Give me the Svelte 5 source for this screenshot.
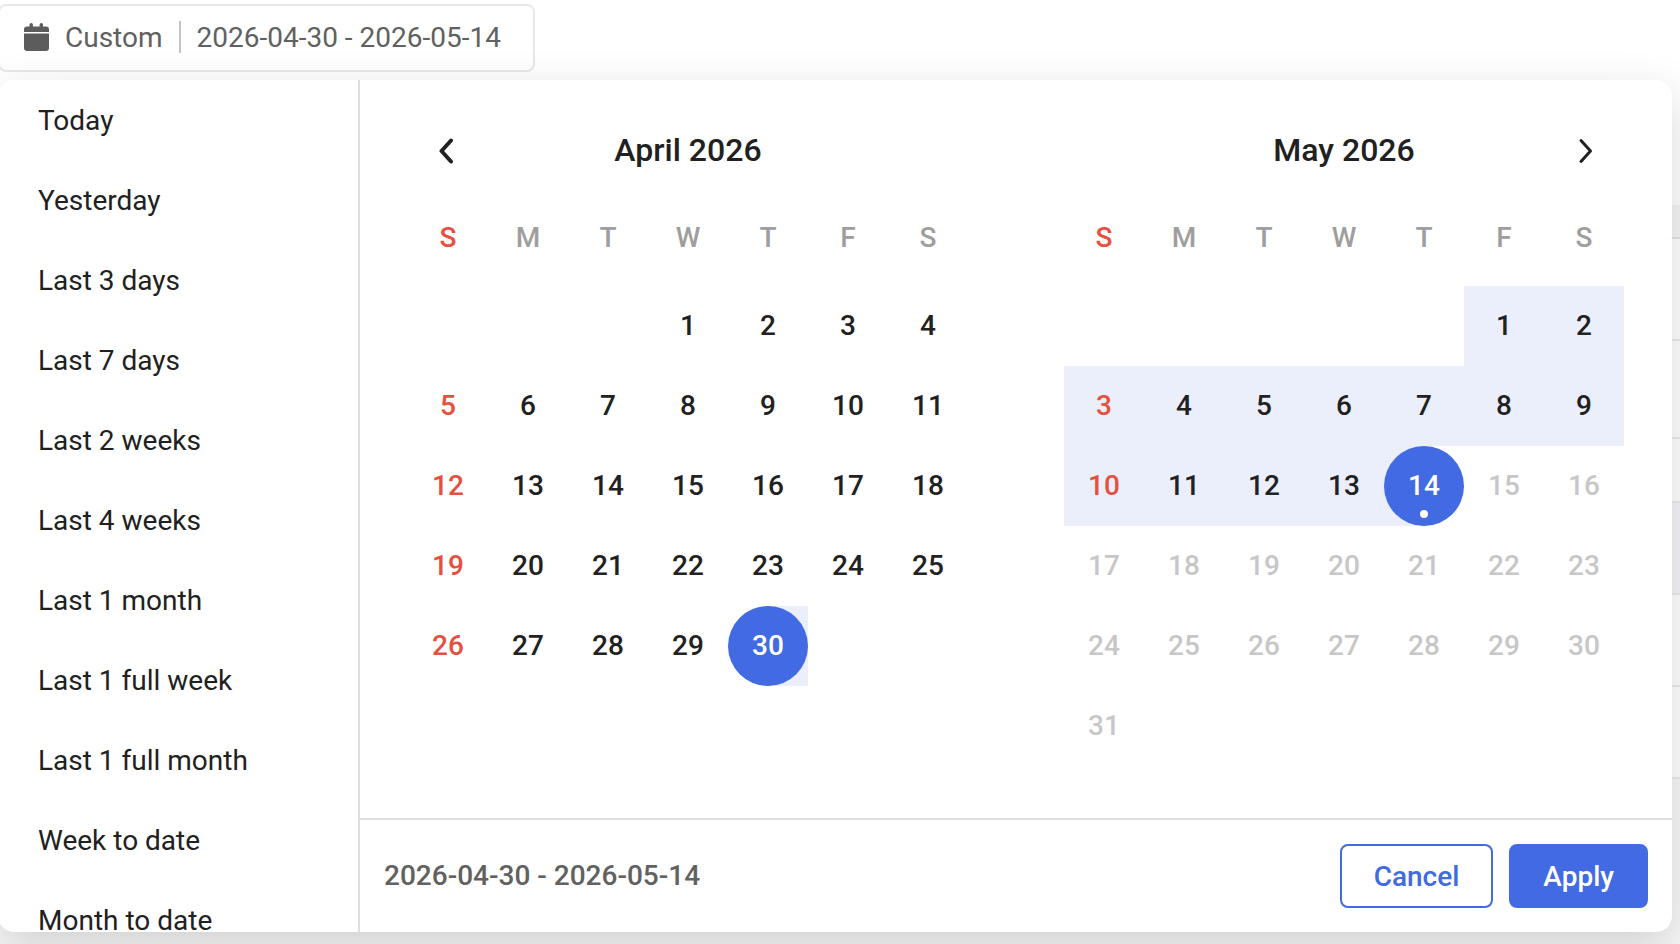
<script>
  let open = $state(true);
  let selected = $state('Custom');

  const range = { start: '2026-04-30', end: '2026-05-14' };
  const today = '2026-05-14';

  const presets = [
    'Today',
    'Yesterday',
    'Last 3 days',
    'Last 7 days',
    'Last 2 weeks',
    'Last 4 weeks',
    'Last 1 month',
    'Last 1 full week',
    'Last 1 full month',
    'Week to date',
    'Month to date'
  ];

  const weekdays = [
    ['S', 'Sunday'],
    ['M', 'Monday'],
    ['T', 'Tuesday'],
    ['W', 'Wednesday'],
    ['T', 'Thursday'],
    ['F', 'Friday'],
    ['S', 'Saturday']
  ];

  const months = [buildMonth('April', 2026, 4), buildMonth('May', 2026, 5)];

  // weeks of a month, padded with null before the 1st and after the last day
  function buildMonth(name, year, month) {
    const first = new Date(year, month - 1, 1).getDay();
    const count = new Date(year, month, 0).getDate();
    const cells = Array(first).fill(null);
    for (let d = 1; d <= count; d++) {
      const iso = `${year}-${String(month).padStart(2, '0')}-${String(d).padStart(2, '0')}`;
      cells.push({ d, iso });
    }
    while (cells.length % 7) cells.push(null);
    const weeks = [];
    for (let i = 0; i < cells.length; i += 7) weeks.push(cells.slice(i, i + 7));
    return { title: `${name} ${year}`, weeks };
  }

  function inRange(iso) {
    return iso > range.start && iso < range.end;
  }
</script>

<div class="page">
  <button class="trigger" onclick={() => (open = !open)}>
    <svg width="25" height="28" viewBox="0 0 25 28" aria-hidden="true">
      <path d="M5.500 4V1.500a1.700 1.500 0 0 1 3.400 0V3.500h6.700v-2a1.700 1.500 0 0 1 3.400 0v2H22a3 3 0 0 1 3 3V9H0V6.500a3 3 0 0 1 3-3h2.500z" />
      <path d="M0 10.500h25V25a3 3 0 0 1-3 3H3a3 3 0 0 1-3-3z" />
    </svg>
    <span>{selected}</span>
    <span class="bar"></span>
    <span>{range.start} - {range.end}</span>
  </button>

  <div class="backdrop" aria-hidden="true">
    <div class="row head"></div>
    <div class="row tall"></div>
    <div class="row"></div>
    <div class="row short"></div>
    <div class="row marked"></div>
    <div class="row"></div>
    <div class="row"></div>
    <div class="rest"></div>
  </div>

  {#if open}
    <div class="popover" role="dialog" aria-label="Date range">
      <ul class="presets">
        {#each presets as preset (preset)}
          <li><button onclick={() => (selected = preset)}>{preset}</button></li>
        {/each}
      </ul>

      <div class="main">
        <div class="months">
          {#each months as month, i (month.title)}
            <section class="month">
              <header>
                {#if i === 0}
                  <button class="nav" aria-label="Previous month">
                    <svg width="20" height="28" viewBox="0 0 20 28"><path d="M13 4.500 3.500 15 13 25.500" stroke-width="4" /></svg>
                  </button>
                {:else}
                  <span></span>
                {/if}
                <h2>{month.title}</h2>
                {#if i === 1}
                  <button class="nav" aria-label="Next month">
                    <svg width="20" height="28" viewBox="0 0 20 28"><path d="M7 4.500 16.500 15 7 25.500" stroke-width="3" /></svg>
                  </button>
                {/if}
              </header>
              <table>
                <thead>
                  <tr>
                    {#each weekdays as [short, full] (full)}
                      <th scope="col" abbr={full}>{short}</th>
                    {/each}
                  </tr>
                </thead>
                <tbody>
                  {#each month.weeks as week}
                    <tr>
                      {#each week as day}
                        {#if day}
                          <td
                            class:in-range={inRange(day.iso)}
                            class:start={day.iso === range.start}
                            class:end={day.iso === range.end}
                            class:today={day.iso === today}
                          >
                            <button disabled={day.iso > today}>{day.d}</button>
                          </td>
                        {:else}
                          <td></td>
                        {/if}
                      {/each}
                    </tr>
                  {/each}
                </tbody>
              </table>
            </section>
          {/each}
        </div>

        <footer>
          <span class="summary">{range.start} - {range.end}</span>
          <button class="btn" onclick={() => (open = false)}>Cancel</button>
          <button class="btn primary" onclick={() => (open = false)}>Apply</button>
        </footer>
      </div>
    </div>
  {/if}
</div>

<style>
  :global(body) {
    background: #fff;
  }
  .page {
    position: relative;
    height: 100vh;
    overflow: hidden;
    padding-top: 4px;
    box-sizing: border-box;
    font-family: Roboto, 'Liberation Sans', sans-serif;
    font-size: 28px;
    color: #212121;
  }
  button {
    font: inherit;
    color: inherit;
    background: none;
    border: 0;
    padding: 0;
    cursor: pointer;
  }
  .trigger {
    display: flex;
    align-items: center;
    gap: 16px;
    height: 68px;
    margin-left: -2px;
    padding: 0 32px 2px 24px;
    border: 2px solid #e8e8e8;
    border-radius: 8px;
    color: #616161;
  }
  .trigger svg {
    fill: #5c5c5c;
  }
  .bar {
    width: 2px;
    height: 32px;
    background: #c4c4c4;
  }

  /* page content that shows past the popover's right edge */
  .backdrop {
    position: absolute;
    inset: 205px 0 0 0;
    display: flex;
    flex-direction: column;
  }
  .row {
    box-sizing: border-box;
    height: 92px;
    flex: none;
    border-bottom: 2px solid #ececec;
  }
  .row:nth-child(3) {
    height: 98px;
  }
  .row.head {
    height: 34px;
    background: #f6f6f6;
    border-color: #e4e4ee;
  }
  .row.tall {
    height: 102px;
  }
  .row.short {
    height: 64px;
  }
  .row.marked {
    background: #f5f5fc;
  }
  .rest {
    flex: 1;
    background: #f8f8f8;
  }

  .popover {
    position: absolute;
    inset: 80px 8px 12px -2px;
    display: flex;
    overflow: hidden;
    background: #fff;
    border-radius: 16px;
    box-shadow: 0 16px 48px rgba(0, 0, 0, 0.16);
  }
  .presets {
    flex: none;
    width: 360px;
    margin: 0;
    padding: 0;
    list-style: none;
    overflow-y: auto;
    scrollbar-width: none;
    border-right: 2px solid #dedede;
  }
  .presets button {
    display: block;
    width: 100%;
    height: 80px;
    padding: 0 40px;
    text-align: left;
  }
  .main {
    flex: 1;
    display: flex;
    flex-direction: column;
  }
  .months {
    flex: 1;
    display: flex;
    justify-content: space-between;
    padding: 30px 48px 0;
  }
  header {
    display: grid;
    grid-template-columns: 80px 1fr 80px;
    align-items: center;
    height: 80px;
  }
  h2 {
    margin: 0;
    font-size: 32px;
    font-weight: 500;
    text-align: center;
  }
  .nav {
    display: grid;
    place-items: center;
    height: 80px;
  }
  .nav path {
    fill: none;
    stroke: #212121;
    stroke-linecap: round;
    stroke-linejoin: round;
  }
  table {
    border-collapse: collapse;
    table-layout: fixed;
    width: 560px;
  }
  th,
  td {
    box-sizing: border-box;
    width: 80px;
    padding: 0;
    text-align: center;
    font-weight: 500;
  }
  th {
    height: 96px;
    padding-bottom: 2px;
    color: #9e9e9e;
  }
  td {
    height: 80px;
  }
  td button {
    position: relative;
    display: block;
    width: 80px;
    height: 80px;
    padding-bottom: 2px;
    border-radius: 50%;
  }
  td button:disabled {
    color: #c7c7c7;
    cursor: default;
  }
  th:first-child,
  td:first-child button:enabled {
    color: #e5503f;
  }
  .in-range {
    background: #ebeffc;
  }
  .start {
    background: linear-gradient(to right, transparent 50%, #ebeffc 50%);
  }
  .end {
    background: linear-gradient(to left, transparent 50%, #ebeffc 50%);
  }
  .start button,
  .end button {
    background: #426ae3;
    color: #fff;
  }
  .today button::after {
    content: '';
    position: absolute;
    left: 36px;
    bottom: 8px;
    width: 8px;
    height: 8px;
    border-radius: 50%;
    background: #fff;
  }
  footer {
    display: flex;
    align-items: center;
    gap: 16px;
    height: 112px;
    padding: 0 24px;
    border-top: 2px solid #dedede;
  }
  .summary {
    flex: 1;
    padding-bottom: 2px;
    font-weight: 500;
    color: #616161;
  }
  .btn {
    height: 64px;
    padding: 0 32px;
    border: 2px solid #426ae3;
    border-radius: 8px;
    font-weight: 500;
    color: #426ae3;
  }
  .btn.primary {
    background: #426ae3;
    color: #fff;
  }
</style>
